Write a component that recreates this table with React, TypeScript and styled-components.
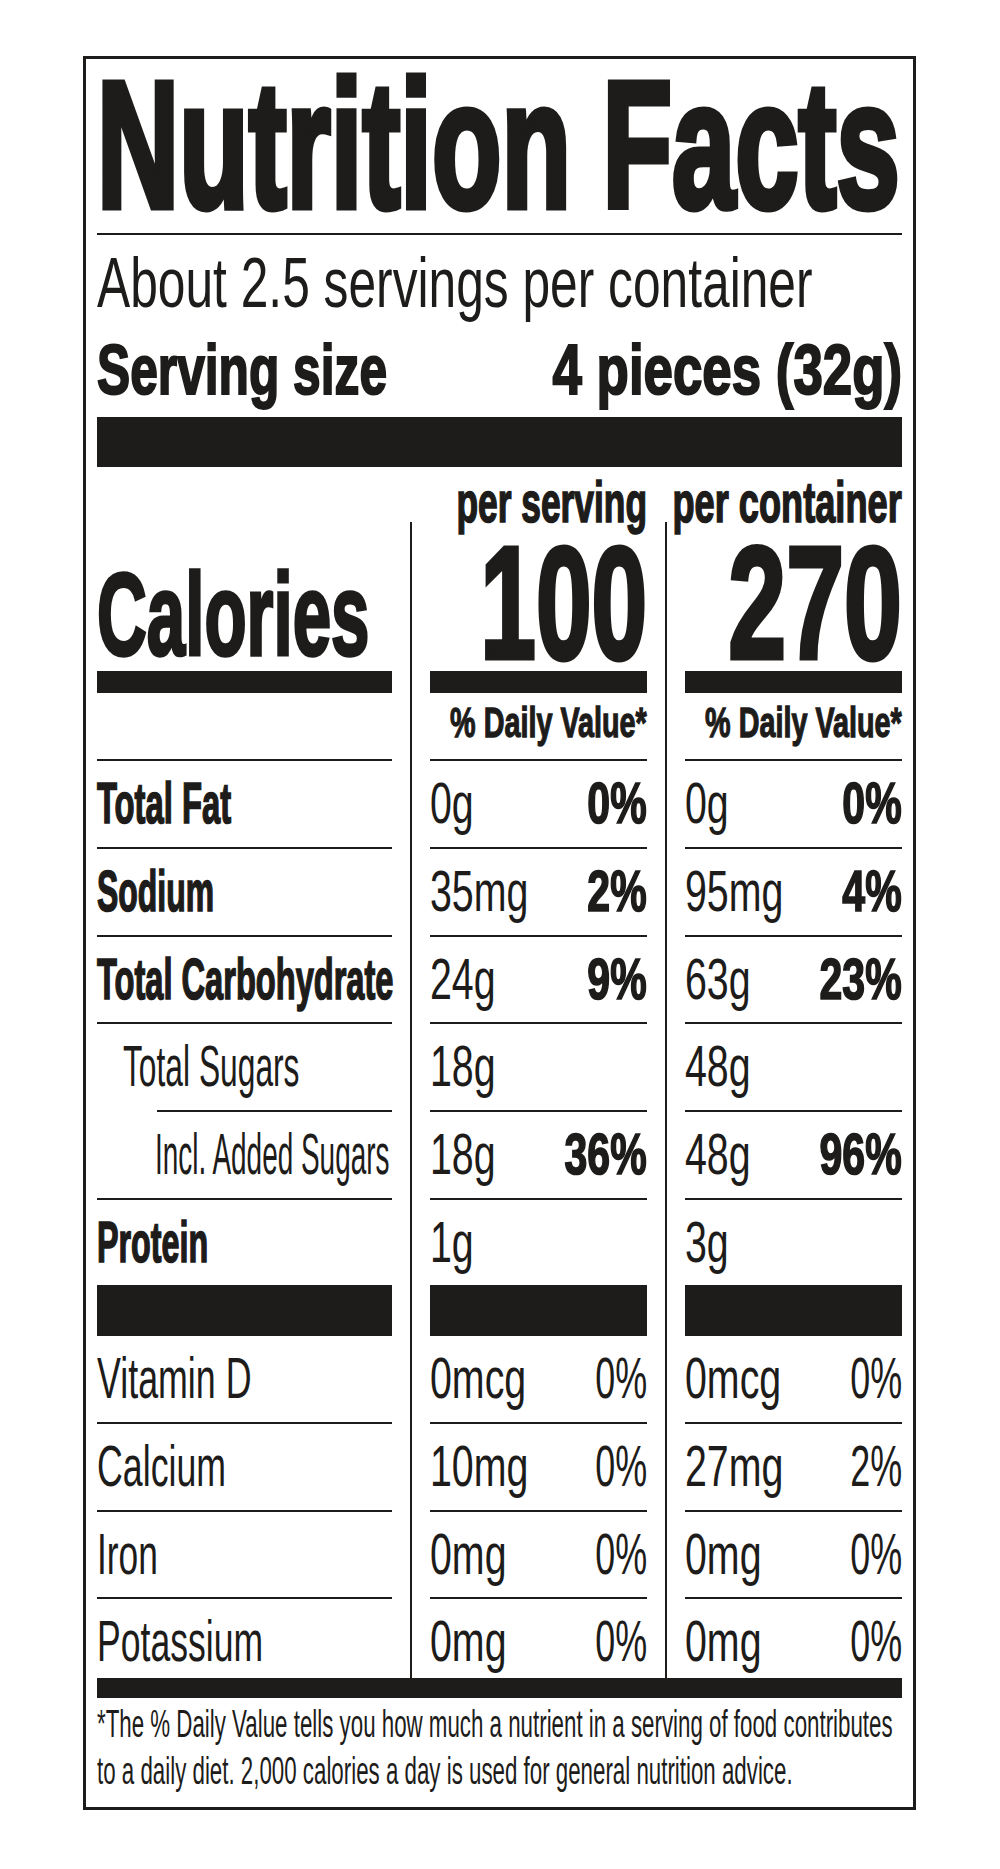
import React from 'react';
import styled, { createGlobalStyle, css } from 'styled-components';

const INK = '#1d1c1a';

const GlobalStyle = createGlobalStyle`
  html, body { margin: 0; padding: 0; background: #ffffff; }
  body {
    font-family: "Liberation Sans", Arial, sans-serif;
    color: ${INK};
  }
`;

/* Heavier strokes to mimic a condensed black face */
const heavy = css`
  font-weight: 700;
  -webkit-text-stroke: 0.03em ${INK};
`;

const Page = styled.main`
  padding: 56px 0 0 83px;
`;

const Label = styled.section`
  box-sizing: border-box;
  width: 833px;
  border: 3px solid ${INK};
  padding: 11px;
`;

/* Text that is squeezed horizontally to mimic a condensed face */
const Condensed = styled.span<{ $s: number; $align?: 'left' | 'right' }>`
  display: flex;
  justify-content: ${(p) => (p.$align === 'right' ? 'flex-end' : 'flex-start')};
  width: ${(p) => (100 / p.$s).toFixed(3)}%;
  margin-left: ${(p) => (p.$align === 'right' ? `${(100 - 100 / p.$s).toFixed(3)}%` : '0')};
  transform: scaleX(${(p) => p.$s});
  transform-origin: ${(p) => (p.$align === 'right' ? '100%' : '0')} 50%;
  white-space: nowrap;
`;

const Title = styled.h1`
  margin: 0;
  font-size: 180px;
  line-height: 150px;
  ${heavy};
  -webkit-text-stroke-width: 7px;
`;

const Rule = styled.div<{ $mt: number; $h: number }>`
  margin-top: ${(p) => p.$mt}px;
  height: ${(p) => p.$h}px;
  background: ${INK};
`;

const ServingBlock = styled.div`
  margin-top: 5.25px;
`;

const ServingLine = styled.div<{ $bold?: boolean }>`
  display: flex;
  font-size: 70px;
  line-height: 87px;
  font-weight: 400;
  ${(p) => p.$bold && heavy};
`;

const Half = styled.div`
  flex: 1 1 0;
  min-width: 0;
`;

const Row = styled.div<{ $h: number }>`
  display: grid;
  grid-template-columns: 295px 217px 217px;
  column-gap: 38px;
  height: ${(p) => p.$h}px;
`;

const Table = styled.div`
  background:
    linear-gradient(${INK}, ${INK}) 313px 0 / 2px 100% no-repeat,
    linear-gradient(${INK}, ${INK}) 568px 0 / 2px 100% no-repeat;
`;

const Cell = styled.div<{
  $pad: number;
  $size: number;
  $lh?: number;
  $bold?: boolean;
  $rule?: number;
  $inset?: number;
  $indent?: number;
}>`
  box-sizing: border-box;
  min-width: 0;
  display: flex;
  align-items: flex-start;
  padding-top: ${(p) => p.$pad}px;
  padding-left: ${(p) => p.$indent ?? 0}px;
  font-size: ${(p) => p.$size}px;
  line-height: ${(p) => p.$lh ?? p.$size}px;
  font-weight: 400;
  ${(p) => p.$bold && heavy};
  background: ${(p) =>
    p.$rule
      ? `linear-gradient(${INK}, ${INK}) no-repeat right bottom / calc(100% - ${p.$inset ?? 0}px) ${p.$rule}px`
      : 'none'};
`;

const Value = styled.div<{ $bold?: boolean }>`
  flex: 1 1 0;
  min-width: 0;
  ${(p) => (p.$bold ? heavy : 'font-weight: 400; -webkit-text-stroke: 0;')};
`;

const Footnote = styled.p`
  margin: 3px 0 0;
  font-size: 38px;
  line-height: 47.5px;
  font-weight: 400;
`;

type Nutrient = {
  label: string;
  bold?: boolean;
  indent?: number;
  ls: number;
  inset?: number;
  h: number;
  rule: number;
  serving: [string, string?];
  container: [string, string?];
  pctBold?: boolean;
};

const nutrients: Nutrient[] = [
  { label: 'Total Fat', bold: true, ls: 0.575, h: 87.8, rule: 2, serving: ['0g', '0%'], container: ['0g', '0%'], pctBold: true },
  { label: 'Sodium', bold: true, ls: 0.56, h: 87.8, rule: 2, serving: ['35mg', '2%'], container: ['95mg', '4%'], pctBold: true },
  { label: 'Total Carbohydrate', bold: true, ls: 0.572, h: 87.8, rule: 2, serving: ['24g', '9%'], container: ['63g', '23%'], pctBold: true },
  { label: 'Total Sugars', indent: 26, ls: 0.557, inset: 60, h: 87.8, rule: 2, serving: ['18g'], container: ['48g'] },
  { label: 'Incl. Added Sugars', indent: 58, ls: 0.49, h: 87.8, rule: 2, serving: ['18g', '36%'], container: ['48g', '96%'], pctBold: true },
  { label: 'Protein', bold: true, ls: 0.566, h: 136, rule: 51, serving: ['1g'], container: ['3g'] },
  { label: 'Vitamin D', ls: 0.628, h: 87.8, rule: 2, serving: ['0mcg', '0%'], container: ['0mcg', '0%'] },
  { label: 'Calcium', ls: 0.627, h: 87.8, rule: 2, serving: ['10mg', '0%'], container: ['27mg', '2%'] },
  { label: 'Iron', ls: 0.62, h: 87.8, rule: 2, serving: ['0mg', '0%'], container: ['0mg', '0%'] },
  { label: 'Potassium', ls: 0.624, h: 78.6, rule: 0, serving: ['0mg', '0%'], container: ['0mg', '0%'] },
];

const AMOUNT_S = 0.69;

function Amounts({ pair, rule, pctBold }: { pair: [string, string?]; rule: number; pctBold?: boolean }) {
  return (
    <Cell $pad={14} $size={57} $rule={rule}>
      <Value>
        <Condensed $s={AMOUNT_S}>{pair[0]}</Condensed>
      </Value>
      <Value $bold={pctBold}>
        {pair[1] ? (
          <Condensed $s={pctBold ? 0.72 : 0.63} $align="right">
            {pair[1]}
          </Condensed>
        ) : null}
      </Value>
    </Cell>
  );
}

export default function App() {
  return (
    <>
      <GlobalStyle />
      <Page>
        <Label>
          <Title>
            <Condensed $s={0.632}>Nutrition Facts</Condensed>
          </Title>
          <Rule $mt={13} $h={2} />
          <ServingBlock>
            <ServingLine>
              <Half>
                <Condensed $s={0.71}>About 2.5 servings per container</Condensed>
              </Half>
            </ServingLine>
            <ServingLine $bold>
              <Half>
                <Condensed $s={0.71}>Serving size</Condensed>
              </Half>
              <Half>
                <Condensed $s={0.755} $align="right">
                  4 pieces (32g)
                </Condensed>
              </Half>
            </ServingLine>
          </ServingBlock>
          <Rule $mt={2.75} $h={50} />

          <Row $h={55}>
            <Cell $pad={13.25} $size={57} $lh={44} $bold />
            <Cell $pad={13.25} $size={57} $lh={44} $bold>
              <Condensed $s={0.62} $align="right">per serving</Condensed>
            </Cell>
            <Cell $pad={13.25} $size={57} $lh={44} $bold>
              <Condensed $s={0.635} $align="right">per container</Condensed>
            </Cell>
          </Row>

          <Table>
            <Row $h={171}>
              <Cell $pad={46} $size={117} $lh={93} $bold $rule={22}>
                <Condensed $s={0.59}>Calories</Condensed>
              </Cell>
              <Cell $pad={20.5} $size={160} $lh={120} $bold $rule={22}>
                <Condensed $s={0.625} $align="right">100</Condensed>
              </Cell>
              <Cell $pad={20.5} $size={160} $lh={120} $bold $rule={22}>
                <Condensed $s={0.65} $align="right">270</Condensed>
              </Cell>
            </Row>

            <Row $h={68}>
              <Cell $pad={8.5} $size={42} $bold $rule={2} />
              <Cell $pad={8.5} $size={42} $bold $rule={2}>
                <Condensed $s={0.685} $align="right">% Daily Value*</Condensed>
              </Cell>
              <Cell $pad={8.5} $size={42} $bold $rule={2}>
                <Condensed $s={0.685} $align="right">% Daily Value*</Condensed>
              </Cell>
            </Row>

            {nutrients.map((n) => (
              <Row key={n.label} $h={n.h}>
                <Cell $pad={14} $size={57} $bold={n.bold} $rule={n.rule} $inset={n.inset} $indent={n.indent}>
                  <Condensed $s={n.ls}>{n.label}</Condensed>
                </Cell>
                <Amounts pair={n.serving} rule={n.rule} pctBold={n.pctBold} />
                <Amounts pair={n.container} rule={n.rule} pctBold={n.pctBold} />
              </Row>
            ))}
          </Table>

          <Rule $mt={0} $h={20} />
          <Footnote>
            <Condensed $s={0.587}>
              *The % Daily Value tells you how much a nutrient in a serving of food contributes
            </Condensed>
            <Condensed $s={0.587}>
              to a daily diet. 2,000 calories a day is used for general nutrition advice.
            </Condensed>
          </Footnote>
        </Label>
      </Page>
    </>
  );
}
